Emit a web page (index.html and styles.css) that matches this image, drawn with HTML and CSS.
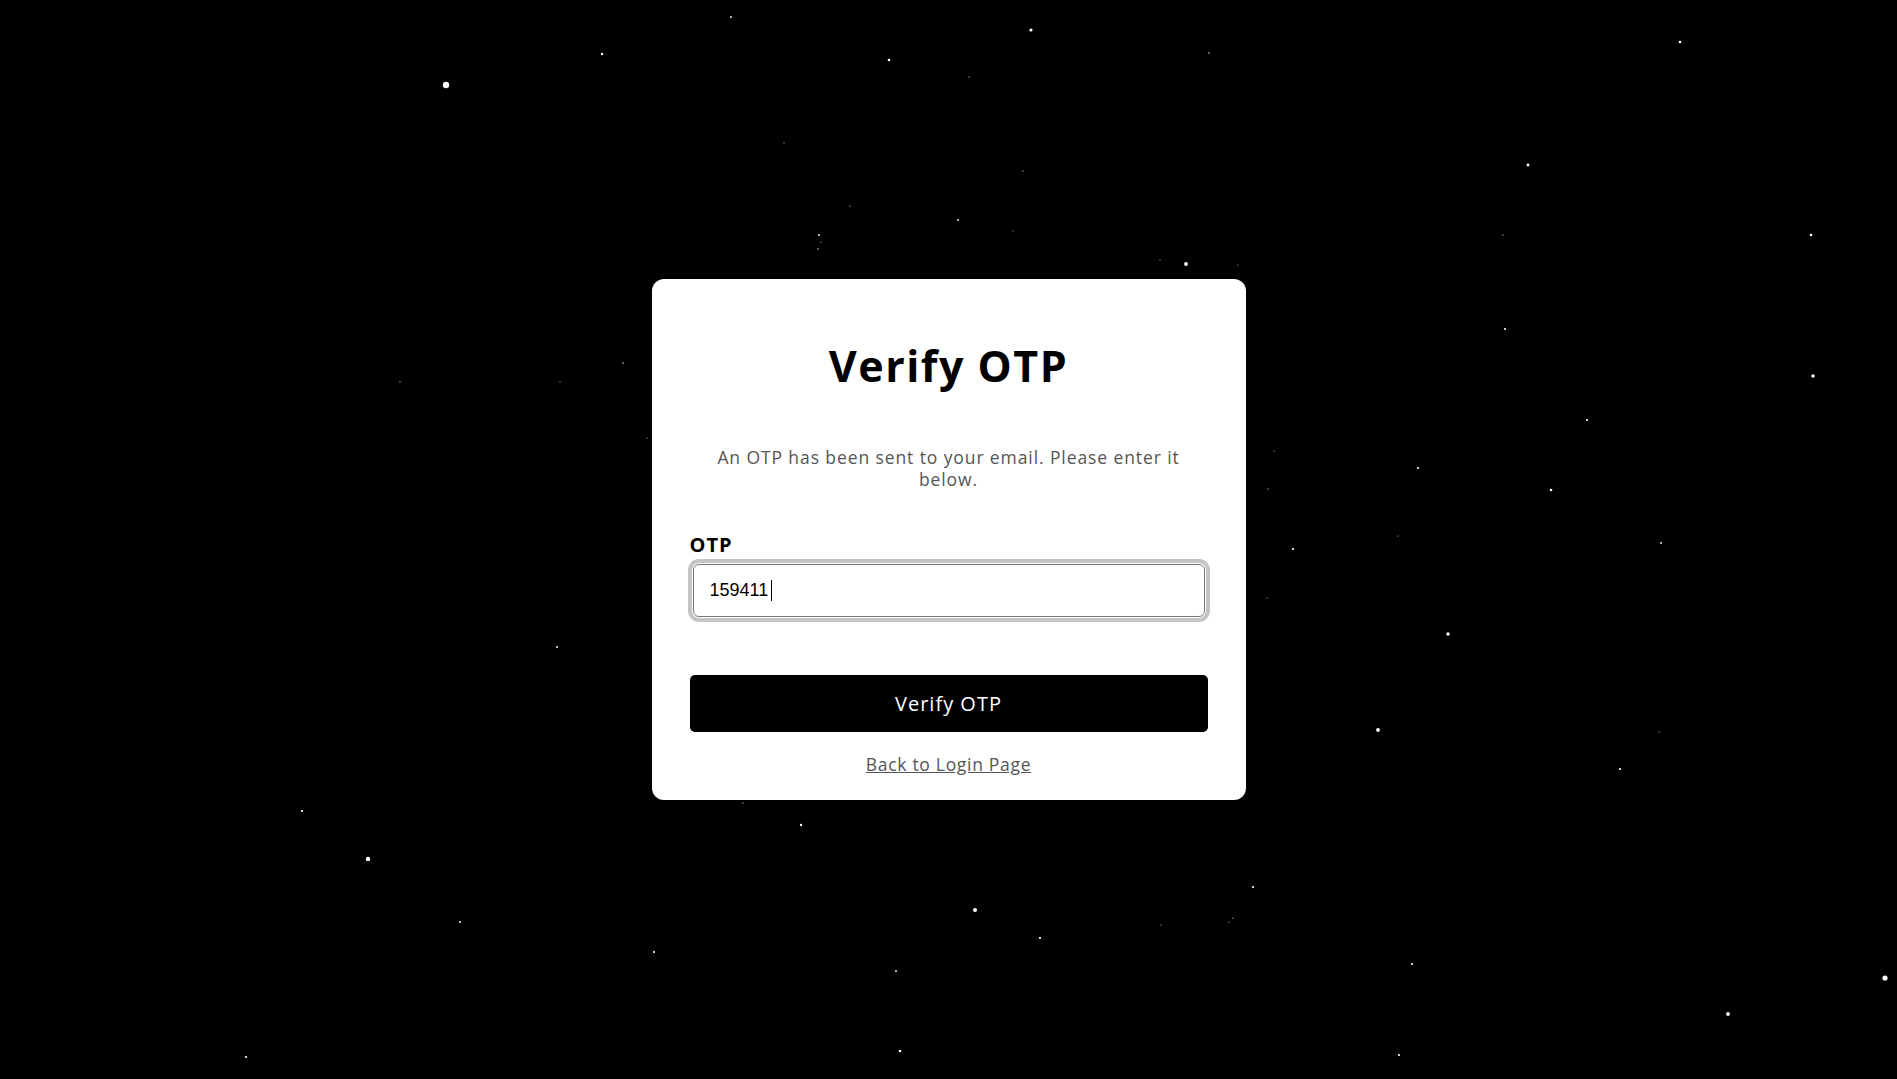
FILE: index.html
```html
<!DOCTYPE html>
<html lang="en">
<head>
<meta charset="utf-8">
<title>Verify OTP</title>
<link rel="stylesheet" href="styles.css">
</head>
<body>
<svg class="stars" width="1897" height="1079" viewBox="0 0 1897 1079" aria-hidden="true">
  <g fill="#fff">
    <circle cx="731" cy="17" r="0.9"/>
    <circle cx="602" cy="54" r="1.2"/>
    <circle cx="446" cy="85" r="3.2"/>
    <circle cx="1031" cy="30" r="1.6"/>
    <circle cx="889" cy="60" r="1.3"/>
    <circle cx="969" cy="77" r="0.6"/>
    <circle cx="1209" cy="53" r="0.7"/>
    <circle cx="1680" cy="42" r="1.3"/>
    <circle cx="784" cy="143" r="0.5"/>
    <circle cx="1023" cy="171" r="0.6"/>
    <circle cx="1528" cy="165" r="1.4"/>
    <circle cx="850" cy="206" r="0.6"/>
    <circle cx="958" cy="220" r="0.9"/>
    <circle cx="1013" cy="231" r="0.5"/>
    <circle cx="819" cy="235" r="0.9"/>
    <circle cx="821" cy="242" r="0.5"/>
    <circle cx="818" cy="249" r="0.7"/>
    <circle cx="1503" cy="235" r="0.6"/>
    <circle cx="1811" cy="235" r="1.3"/>
    <circle cx="1160" cy="260" r="0.5"/>
    <circle cx="1186" cy="264" r="1.9"/>
    <circle cx="1238" cy="265" r="0.5"/>
    <circle cx="1505" cy="329" r="1.1"/>
    <circle cx="1813" cy="376" r="1.7"/>
    <circle cx="400" cy="382" r="0.6"/>
    <circle cx="560" cy="382" r="0.5"/>
    <circle cx="623" cy="363" r="0.7"/>
    <circle cx="1587" cy="420" r="1.1"/>
    <circle cx="647" cy="438" r="0.5"/>
    <circle cx="1274" cy="451" r="0.5"/>
    <circle cx="1418" cy="468" r="1.1"/>
    <circle cx="1268" cy="489" r="0.6"/>
    <circle cx="1551" cy="490" r="1.3"/>
    <circle cx="1398" cy="536" r="0.5"/>
    <circle cx="1661" cy="543" r="0.9"/>
    <circle cx="1293" cy="549" r="1.1"/>
    <circle cx="1267" cy="598" r="0.5"/>
    <circle cx="1448" cy="634" r="1.7"/>
    <circle cx="557" cy="647" r="1"/>
    <circle cx="1378" cy="730" r="1.9"/>
    <circle cx="1659" cy="732" r="0.5"/>
    <circle cx="1620" cy="769" r="1.1"/>
    <circle cx="743" cy="803" r="0.6"/>
    <circle cx="801" cy="825" r="1.2"/>
    <circle cx="302" cy="811" r="1.1"/>
    <circle cx="368" cy="859" r="2.2"/>
    <circle cx="1253" cy="887" r="1.1"/>
    <circle cx="975" cy="910" r="2"/>
    <circle cx="460" cy="922" r="1"/>
    <circle cx="1040" cy="938" r="1.1"/>
    <circle cx="1233" cy="918" r="0.6"/>
    <circle cx="1229" cy="922" r="0.5"/>
    <circle cx="1161" cy="925" r="0.5"/>
    <circle cx="1412" cy="964" r="1.1"/>
    <circle cx="896" cy="971" r="0.9"/>
    <circle cx="654" cy="952" r="1.1"/>
    <circle cx="1885" cy="978" r="2.6"/>
    <circle cx="1728" cy="1014" r="1.9"/>
    <circle cx="900" cy="1051" r="1.3"/>
    <circle cx="246" cy="1057" r="1.1"/>
    <circle cx="1399" cy="1055" r="1.1"/>
  </g>
</svg>
<main class="page">
  <form class="card" action="#" onsubmit="return false">
    <h1 class="card-title">Verify OTP</h1>
    <p class="card-text">An OTP has been sent to your email. Please enter it below.</p>
    <label class="field-label" for="otp">OTP</label>
    <div class="field-wrap">
      <input class="field-input" id="otp" type="text" value="159411" autofocus>
      <span class="field-caret" aria-hidden="true"></span>
    </div>
    <button class="btn-primary" type="submit">Verify OTP</button>
    <a class="back-link" href="#">Back to Login Page</a>
  </form>
</main>
</body>
</html>
```
FILE: styles.css
```css
* { box-sizing: border-box; }

html, body {
  margin: 0;
  height: 100%;
  background: #000;
}

body {
  font-family: "Open Sans", "Noto Sans", sans-serif;
  color: #000;
  overflow: hidden;
}

.stars {
  position: fixed;
  left: 0;
  top: 0;
  z-index: 0;
}

.page {
  position: relative;
  z-index: 1;
  height: 100%;
  display: flex;
  align-items: center;
  justify-content: center;
}

.card {
  width: 594px;
  height: 521px;
  background: #fff;
  border-radius: 12px;
  padding: 62px 38px 0;
  display: flex;
  flex-direction: column;
}

.card-title {
  margin: 0;
  font-size: 43px;
  line-height: 50px;
  font-weight: 700;
  letter-spacing: 1.5px;
  text-align: center;
}

.card-text {
  margin: 55px 22px 0;
  font-size: 17.5px;
  line-height: 22px;
  letter-spacing: 0.9px;
  color: #555;
  text-align: center;
}

.field-label {
  margin-top: 44px;
  font-size: 20px;
  line-height: 22px;
  font-weight: 700;
  letter-spacing: 1px;
}

.field-wrap {
  position: relative;
  display: flex;
  margin: 8px 3px 0;
}

.field-input {
  flex: 1;
  height: 53px;
  padding: 0 16px;
  border: 1px solid #777;
  border-radius: 6px;
  outline: 4px solid #c4c4c4;
  outline-offset: 1px;
  font-family: "Liberation Sans", Arial, sans-serif;
  font-size: 18px;
  color: #000;
  caret-color: transparent;
  background: #fff;
}

.field-caret {
  position: absolute;
  left: 78px;
  top: 16px;
  width: 1px;
  height: 21px;
  background: #000;
}

.btn-primary {
  margin-top: 58px;
  height: 57px;
  border: 0;
  border-radius: 5px;
  background: #000;
  color: #fff;
  font-family: "Open Sans", "Noto Sans", sans-serif;
  font-size: 20px;
  letter-spacing: 1px;
  cursor: pointer;
}

.back-link {
  margin-top: 21px;
  align-self: center;
  font-size: 17.5px;
  line-height: 22px;
  letter-spacing: 0.7px;
  color: #555;
  text-decoration: underline;
}
```
